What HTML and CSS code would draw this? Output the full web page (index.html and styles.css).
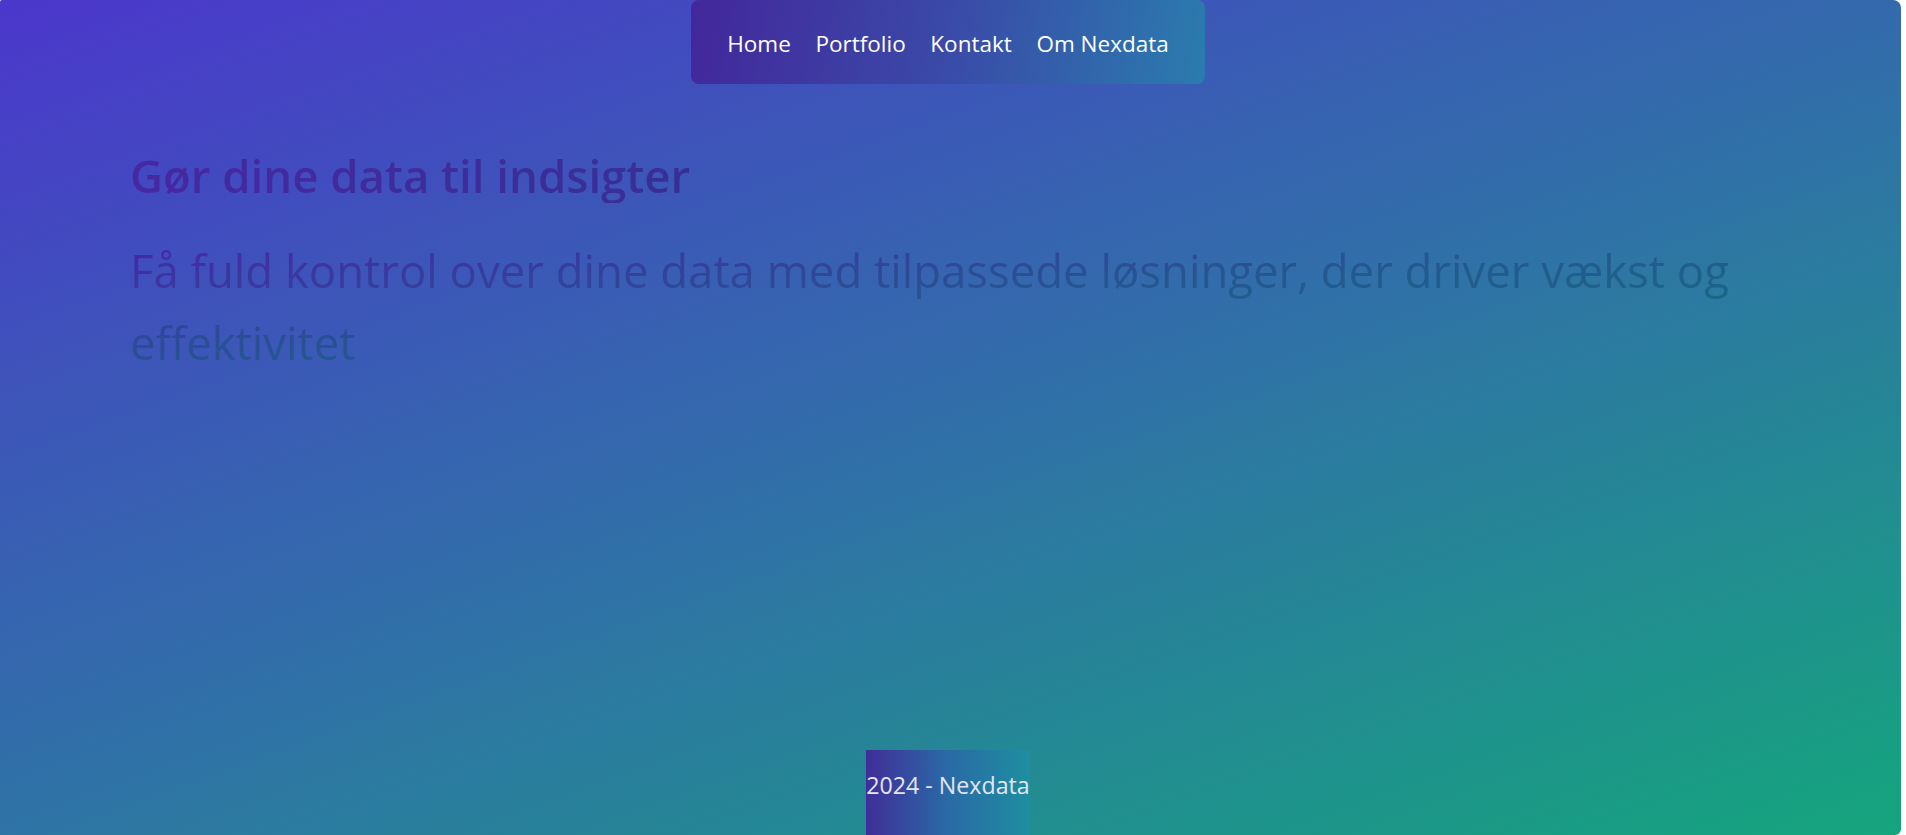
FILE: index.html
```html
<!DOCTYPE html>
<html lang="da">
<head>
<meta charset="utf-8">
<title>Nexdata</title>
<link rel="stylesheet" href="styles.css">
</head>
<body>
<div class="page">
  <nav class="topnav">
    <a class="navlink" href="#">Home</a>
    <a class="navlink" href="#">Portfolio</a>
    <a class="navlink" href="#">Kontakt</a>
    <a class="navlink" href="#">Om Nexdata</a>
  </nav>
  <main class="hero">
    <h1 class="hero-title">Gør dine data til indsigter</h1>
    <p class="hero-lead">Få fuld kontrol over dine data med tilpassede løsninger, der driver vækst og effektivitet</p>
  </main>
  <footer class="site-footer">
    <span class="footer-box">2024 - Nexdata</span>
  </footer>
</div>
</body>
</html>
```

FILE: styles.css
```css
html, body {
  margin: 0;
  padding: 0;
  background: #ffffff;
}

body {
  font-family: "Open Sans", "Noto Sans", "Liberation Sans", sans-serif;
}

.page {
  width: calc(100% - 5px);
  min-height: 100vh;
  box-sizing: border-box;
  padding-right: 5px;
  display: flex;
  flex-direction: column;
  background: linear-gradient(160deg, #4b37cc 0%, #316fa9 50%, #15a57d 100%);
  border-radius: 2px 8px 6px 0;
  overflow: hidden;
}

.topnav {
  align-self: center;
  display: flex;
  padding: 0 24px;
  height: 84px;
  align-items: center;
  box-sizing: border-box;
  border-radius: 8px;
  background: linear-gradient(100deg, #43279b 0%, #3a4aa8 50%, #2a7cae 100%);
}

.navlink {
  color: #ffffff;
  text-decoration: none;
  font-size: 22.5px;
  line-height: 30px;
  padding: 3px 12.3px 0;
}

.hero {
  padding: 0 125px 0 130px;
}

.hero-title {
  margin: 64px 0 0;
  font-size: 45.5px;
  font-weight: 600;
  line-height: 1.2;
  background: linear-gradient(to right, #4628a2, #1b3e7b);
  -webkit-background-clip: text;
  background-clip: text;
  color: transparent;
}

.hero-lead {
  margin: 31px 0 0;
  font-size: 45.5px;
  font-weight: 400;
  line-height: 72px;
  background: linear-gradient(to bottom right, #4a22aa, #245890 50%, #0b7a78);
  -webkit-background-clip: text;
  background-clip: text;
  color: transparent;
}

.site-footer {
  margin-top: auto;
  display: flex;
  justify-content: center;
}

.footer-box {
  display: block;
  padding: 20px 0 35px;
  font-size: 23.2px;
  line-height: 30px;
  color: #e3e6f2;
  background: linear-gradient(to right, #402e98, #2a6aa6 50%, #1e8fa0);
}
```
